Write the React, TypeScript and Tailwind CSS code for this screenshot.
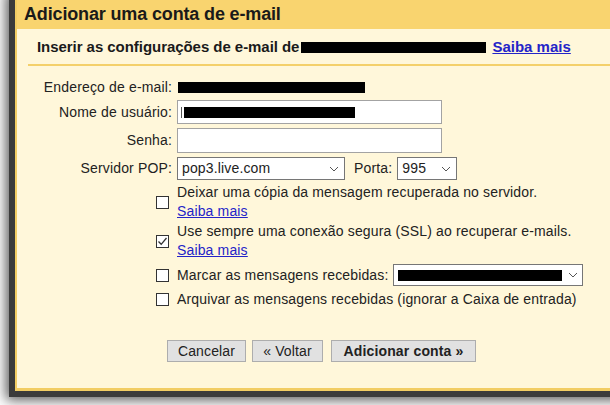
import React from "react";

const Chevron = () => (
  <svg width="10" height="6" viewBox="0 0 10 6" className="shrink-0">
    <polyline points="1,1 5,5 9,1" fill="none" stroke="#555" strokeWidth="1" />
  </svg>
);

const Box = ({ checked = false }: { checked?: boolean }) => (
  <div className="w-[13px] h-[13px] border border-[#333] bg-white shrink-0 flex items-center justify-center">
    {checked && (
      <svg width="11" height="11" viewBox="0 0 11 11">
        <polyline points="1.5,5.5 4.2,8.3 9.5,2" fill="none" stroke="#333" strokeWidth="1.3" />
      </svg>
    )}
  </div>
);

const Link = ({ children }: { children: React.ReactNode }) => (
  <span className="text-[#2424c8] underline">{children}</span>
);

export default function App() {
  return (
    <div className="w-[610px] h-[405px] bg-white overflow-hidden font-['Liberation_Sans',Arial,sans-serif] text-[#222]">
      <div className="ml-[15px] w-[620px] h-[391px] border-l-2 border-b-[3px] border-[#f2cd63] bg-[#fff7da] shadow-[0_0_0_6px_#3b3b3b,0_0_12px_9px_rgba(59,59,59,0.85)] flex flex-col">
        <div className="h-[29px] bg-[#f9d46f] flex items-center pl-[7px] pb-[1px]">
          <span className="text-[18px] font-bold tracking-[-0.15px] text-[#1a1a1a]">Adicionar uma conta de e-mail</span>
        </div>
        <div className="h-[35px] flex items-center pl-[20px] pt-[1px]">
          <span className="text-[15px] font-bold tracking-[-0.05px] text-[#1a1a1a]">Inserir as configurações de e-mail de</span>
          <span className="ml-[2px] w-[185px] h-[11px] bg-black inline-block" />
          <span className="text-[15px] font-bold ml-[6px]"><Link>Saiba mais</Link></span>
        </div>
        <div className="ml-[11px] h-[2px] bg-[#f4d06a]" />

        <div className="flex flex-col text-[14px] tracking-[0.15px]">
          <div className="flex items-center h-[22px] mt-[10px]">
            <div className="w-[155px] text-right">Endereço de e-mail:</div>
            <div className="ml-[6px] w-[187px] h-[11px] bg-black" />
          </div>
          <div className="flex items-center h-[24px] mt-[2px]">
            <div className="w-[155px] text-right">Nome de usuário:</div>
            <div className="ml-[5px] w-[265px] h-[24px] border border-[#a3a3a3] bg-white flex items-center pl-[3px]">
              <span className="w-[1px] h-[11px] bg-[#555]" />
              <span className="ml-[2px] w-[171px] h-[11px] bg-black" />
            </div>
          </div>
          <div className="flex items-center h-[25px] mt-[4px]">
            <div className="w-[155px] text-right">Senha:</div>
            <div className="ml-[5px] w-[265px] h-[25px] border border-[#a3a3a3] bg-white" />
          </div>
          <div className="flex items-center h-[23px] mt-[4px]">
            <div className="w-[155px] text-right">Servidor POP:</div>
            <div className="ml-[5px] w-[168px] h-[23px] border border-[#767676] bg-white flex items-center justify-between pl-[4px] pr-[5px]">
              <span>pop3.live.com</span>
              <Chevron />
            </div>
            <span className="ml-[9px]">Porta:</span>
            <div className="ml-[5px] w-[60px] h-[23px] border border-[#767676] bg-white flex items-center justify-between pl-[4px] pr-[5px]">
              <span>995</span>
              <Chevron />
            </div>
          </div>

          <div className="flex items-center mt-[3px] leading-[19px]">
            <div className="w-[139px]" />
            <Box />
            <div className="ml-[8px] flex flex-col">
              <span>Deixar uma cópia da mensagem recuperada no servidor.</span>
              <Link>Saiba mais</Link>
            </div>
          </div>
          <div className="flex items-center mt-[1px] leading-[19px]">
            <div className="w-[139px]" />
            <Box checked />
            <div className="ml-[8px] flex flex-col">
              <span>Use sempre uma conexão segura (SSL) ao recuperar e-mails.</span>
              <Link>Saiba mais</Link>
            </div>
          </div>
          <div className="flex items-center mt-[4px] h-[22px]">
            <div className="w-[139px]" />
            <Box />
            <span className="ml-[8px]">Marcar as mensagens recebidas:</span>
            <div className="ml-[4px] w-[190px] h-[22px] border border-[#767676] bg-white flex items-center justify-between pl-[4px] pr-[4px]">
              <span className="w-[164px] h-[11px] bg-black" />
              <Chevron />
            </div>
          </div>
          <div className="flex items-center mt-[4px] leading-[19px]">
            <div className="w-[139px]" />
            <Box />
            <span className="ml-[8px]">Arquivar as mensagens recebidas (ignorar a Caixa de entrada)</span>
          </div>

          <div className="flex items-center mt-[31px] pl-[150px] gap-[6px]">
            <div className="w-[79px] h-[22px] bg-[#e1e1e1] border border-[#adadad] flex items-center justify-center">Cancelar</div>
            <div className="w-[71px] h-[22px] bg-[#e1e1e1] border border-[#adadad] flex items-center justify-center">« Voltar</div>
            <div className="ml-[2px] w-[145px] h-[22px] bg-[#e1e1e1] border border-[#adadad] flex items-center justify-center font-bold">Adicionar conta »</div>
          </div>
        </div>
      </div>
    </div>
  );
}
